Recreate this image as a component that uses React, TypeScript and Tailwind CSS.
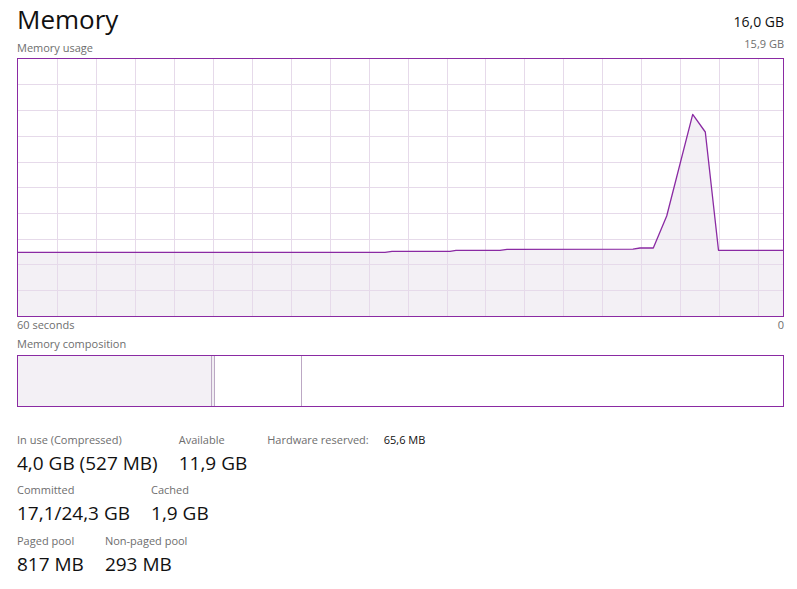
import React from 'react'

const PURPLE = '#8a2aa3'
const GRID = '#e6daea'
const FILL = '#f3f0f5'

// chart inner box starts at page (18, 59)
const OX = 18
const OY = 59
const W = 765
const H = 257

const vLines = Array.from({ length: 19 }, (_, i) => Math.round(57 + i * 38.95))
const hLines = [84, 110, 136, 162, 187, 213, 239, 264, 290]

const usage: [number, number][] = [
  [17, 252.3], [385, 252.3], [392, 251.3], [450, 251.3], [456, 250.3], [500, 250.3],
  [507, 249.3], [633, 249.2], [640, 248], [653.3, 248], [666.7, 216], [692.7, 114.3],
  [705.3, 132], [718.5, 250.3], [783, 250.3],
]

function UsageChart() {
  const pts = usage.map(([x, y]) => `${x - OX},${y - OY}`).join(' ')
  const area = `${-1},${H} ${pts} ${W + 1},${H}`
  return (
    <div className="w-[767px] h-[259px] border border-[#8a2aa3]">
      <svg width={W} height={H} className="block">
        <polygon points={area} fill={FILL} />
        {vLines.map((x) => (
          <line key={'v' + x} x1={x - OX + 0.5} x2={x - OX + 0.5} y1={0} y2={H} stroke={GRID} strokeWidth={1} />
        ))}
        {hLines.map((y) => (
          <line key={'h' + y} x1={0} x2={W} y1={y - OY + 0.5} y2={y - OY + 0.5} stroke={GRID} strokeWidth={1} />
        ))}
        <polyline points={pts} fill="none" stroke={PURPLE} strokeWidth={1.3} strokeLinejoin="round" />
      </svg>
    </div>
  )
}

function CompositionBar() {
  return (
    <div className="w-[767px] h-[52px] border border-[#8a2aa3] flex">
      <div className="w-[193px] h-full bg-[#f3f0f5]" />
      <div className="w-[4px] h-full bg-[#f1eef3] border-x border-[#bca8c4]" />
      <div className="w-[87px] h-full bg-white border-r border-[#bca8c4]" />
      <div className="flex-1 h-full bg-white" />
    </div>
  )
}

function Stat({ label, value }: { label: string; value: string }) {
  return (
    <div>
      <div className="text-[11px] leading-[16px] text-[#6e6e6e]">{label}</div>
      <div className="mt-[3px] text-[19px] leading-[24px] text-[#111]">{value}</div>
    </div>
  )
}

export default function App() {
  return (
    <div
      className="w-[797px] h-[589px] bg-white overflow-hidden pl-[17px]"
      style={{ fontFamily: '"Open Sans", "Noto Sans", sans-serif' }}
    >
      <div className="w-[767px]">
        {/* header */}
        <div className="h-[36px] flex justify-between items-start">
          <div className="mt-[3px] text-[26px] leading-[32px] text-[#111]">Memory</div>
          <div className="mt-[12px] text-[14px] leading-[20px] text-[#111]">16,0 GB</div>
        </div>
        <div className="h-[22px] flex justify-between items-start">
          <div className="mt-[4px] text-[11px] leading-[16px] text-[#6e6e6e]">Memory usage</div>
          <div className="text-[11px] leading-[16px] text-[#6e6e6e]">15,9 GB</div>
        </div>

        <UsageChart />

        <div className="flex justify-between text-[11px] leading-[16px] text-[#6e6e6e]">
          <span>60 seconds</span>
          <span>0</span>
        </div>
        <div className="mt-[3px] text-[11px] leading-[16px] text-[#6e6e6e]">Memory composition</div>
        <div className="mt-[3px]">
          <CompositionBar />
        </div>

        {/* stats */}
        <div className="mt-[25px] flex gap-[21px]">
          <Stat label="In use (Compressed)" value="4,0 GB (527 MB)" />
          <Stat label="Available" value="11,9 GB" />
          <div className="-ml-[1px] flex gap-[15px] text-[11px] leading-[16px]">
            <span className="text-[#6e6e6e]">Hardware reserved:</span>
            <span className="text-[#111]">65,6 MB</span>
          </div>
        </div>
        <div className="mt-[7px] flex gap-[21px]">
          <Stat label="Committed" value="17,1/24,3 GB" />
          <Stat label="Cached" value="1,9 GB" />
        </div>
        <div className="mt-[8px] flex gap-[21px]">
          <Stat label="Paged pool" value="817 MB" />
          <Stat label="Non-paged pool" value="293 MB" />
        </div>
      </div>
    </div>
  )
}
